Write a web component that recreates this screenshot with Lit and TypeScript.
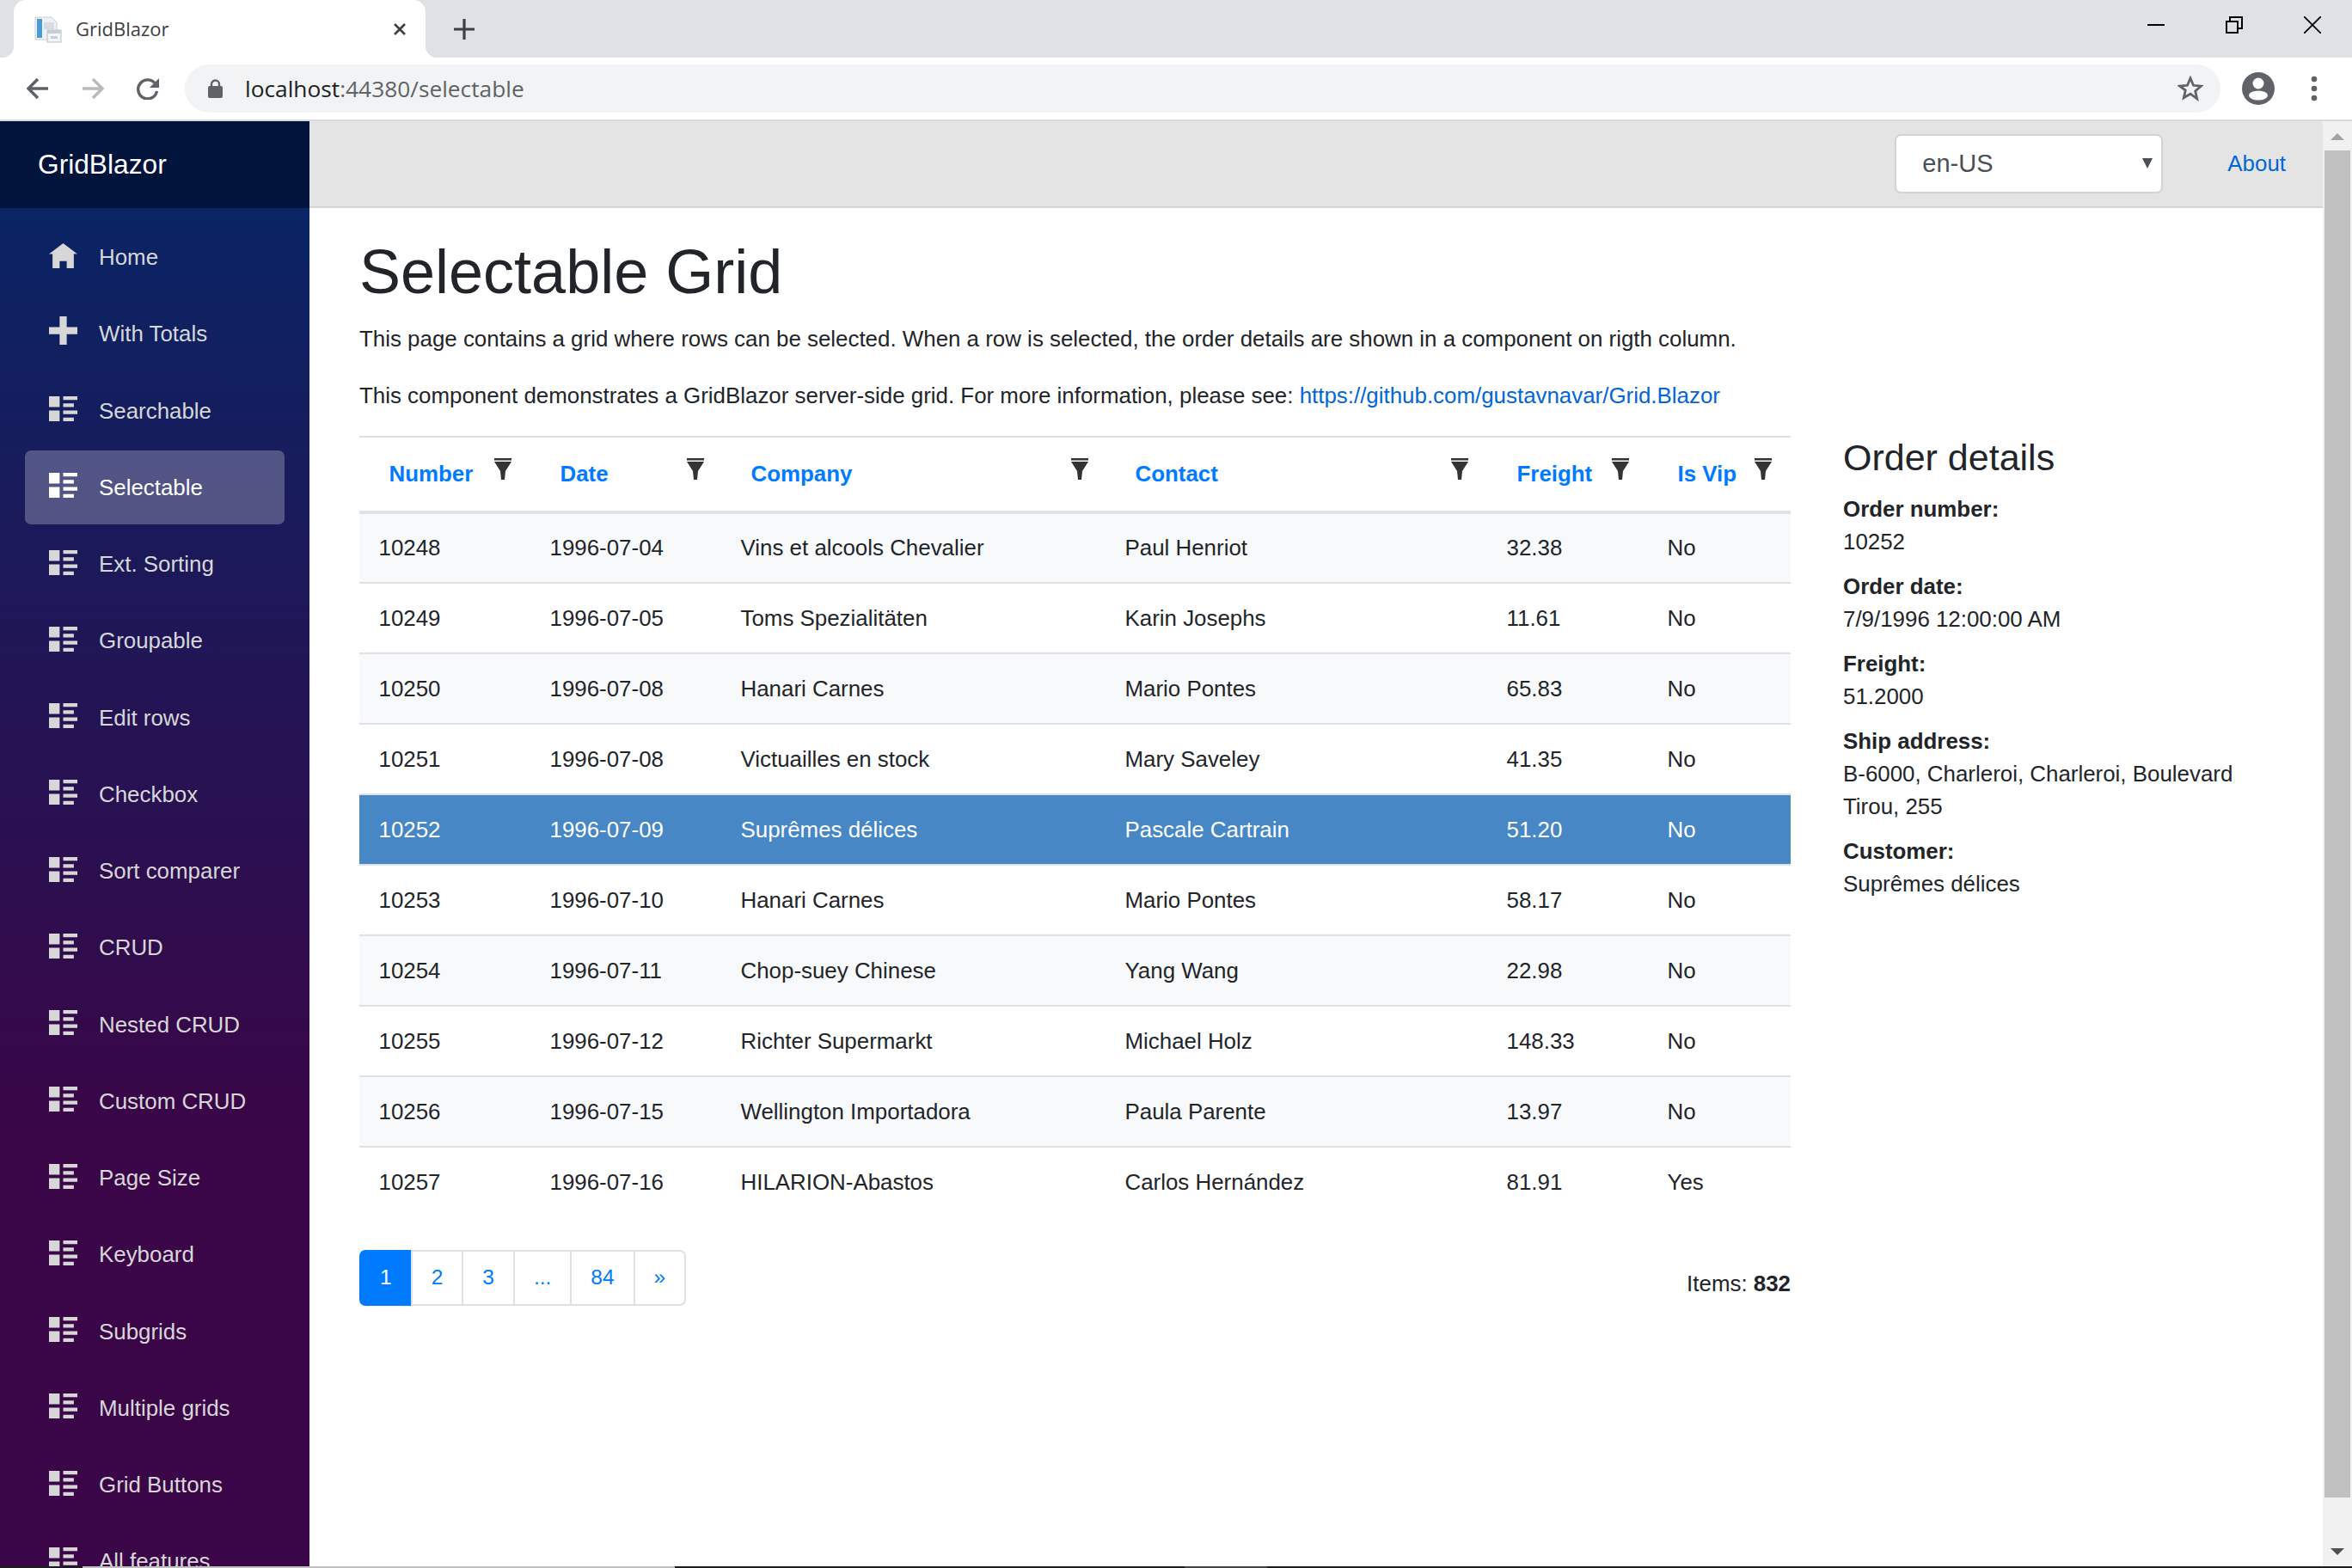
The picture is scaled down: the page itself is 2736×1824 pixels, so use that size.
import { css, html, LitElement, svg } from "lit";
import { customElement } from "lit/decorators.js";

const SANS = css`"Liberation Sans", Arial, sans-serif`;

const LIST_RICH =
  "M0 0v3h3v-3h-3zm4 0v1h4v-1h-4zm0 2v1h3v-1h-3zm-4 2v3h3v-3h-3zm4 0v1h4v-1h-4zm0 2v1h3v-1h-3z";
const HOME = "M4 0l-4 3h1v4h2v-2h2v2h2v-4.03l1 .03-4-3z";
const PLUS = "M3 0v3h-3v2h3v3h2v-3h3v-2h-3v-3h-2z";

@customElement("browser-chrome")
export class BrowserChrome extends LitElement {
  static styles = css`
    :host {
      display: block;
      flex: none;
      font-family: "Open Sans", "Noto Sans", sans-serif;
    }

    .strip {
      display: flex;
      align-items: stretch;
      height: 67px;
      background: #dee1e6;
      padding-left: 16px;
    }

    .tab {
      position: relative;
      flex: none;
      display: flex;
      align-items: center;
      width: 479px;
      background: #fff;
      border-radius: 14px 14px 0 0;
      padding: 0 22px 0 24px;
      box-sizing: border-box;
    }

    .tab::before,
    .tab::after {
      content: "";
      position: absolute;
      bottom: 0;
      width: 14px;
      height: 14px;
      background: #fff;
    }

    .tab::before {
      left: -14px;
      -webkit-mask: radial-gradient(circle at 0 0, transparent 14px, #000 14.5px);
      mask: radial-gradient(circle at 0 0, transparent 14px, #000 14.5px);
    }

    .tab::after {
      right: -14px;
      -webkit-mask: radial-gradient(circle at 100% 0, transparent 14px, #000 14.5px);
      mask: radial-gradient(circle at 100% 0, transparent 14px, #000 14.5px);
    }

    .favicon {
      width: 32px;
      height: 32px;
      flex: none;
    }

    .tab-title {
      flex: 1;
      margin: 0 0 2px 16px;
      font-size: 22px;
      color: #3c4043;
    }

    .new-tab {
      margin-left: 33px;
      align-self: center;
    }

    .spacer {
      flex: 1;
    }

    .window-controls {
      display: flex;
      align-items: center;
      gap: 71px;
      padding-right: 36px;
      margin-top: -10px;
    }

    .toolbar {
      display: flex;
      align-items: center;
      height: 72px;
      background: #fff;
      border-bottom: 2px solid #d9dadd;
      box-sizing: content-box;
      padding-left: 31px;
    }

    .nav-buttons {
      display: flex;
      align-items: center;
      gap: 38px;
    }

    .omnibox {
      flex: none;
      display: flex;
      align-items: center;
      width: 2368px;
      height: 56px;
      margin-left: 30px;
      padding: 0 20px 0 27px;
      box-sizing: border-box;
      background: #f1f3f4;
      border-radius: 28px;
    }

    .url {
      flex: 1;
      margin-left: 26px;
      font-size: 26.3px;
      color: #5f6368;
    }

    .url b {
      font-weight: 400;
      color: #202124;
    }

    .avatar {
      margin-left: 25px;
    }

    .dots {
      margin-left: 42px;
    }

    svg {
      display: block;
      flex: none;
    }
  `;

  render() {
    return html`<div class="strip">
        <div class="tab">
          <svg class="favicon" viewBox="0 0 32 32">
            <path d="M1 2h19l6 6v20H1z" fill="#eef1f5" stroke="#c9ced6" />
            <rect x="3" y="4" width="6" height="22" fill="#4a9bd8" />
            <rect x="11" y="8" width="12" height="8" fill="#d8dde4" />
            <rect x="15" y="17" width="16" height="14" fill="#f4f5f7" stroke="#b9bec6" />
            <rect x="15" y="17" width="16" height="4" fill="#c9ced6" />
            <rect x="19" y="24" width="8" height="3" fill="#c4d0de" />
          </svg>
          <span class="tab-title">GridBlazor</span>
          <svg width="16" height="16" viewBox="0 0 16 16">
            <path d="M2 2l12 12M14 2L2 14" stroke="#3c4043" stroke-width="2.6" />
          </svg>
        </div>
        <svg class="new-tab" width="24" height="24" viewBox="0 0 24 24">
          <path d="M12 0v24M0 12h24" stroke="#3c4043" stroke-width="3.2" />
        </svg>
        <div class="spacer"></div>
        <div class="window-controls">
          <svg width="20" height="20" viewBox="0 0 20 20">
            <path d="M0 10h20" stroke="#000" stroke-width="2" />
          </svg>
          <svg width="20" height="20" viewBox="0 0 20 20">
            <path
              d="M1 6h13v13H1zM5 5V1h14v13h-4"
              fill="none"
              stroke="#000"
              stroke-width="2"
            />
          </svg>
          <svg width="20" height="20" viewBox="0 0 20 20">
            <path d="M0 0l20 20M20 0L0 20" stroke="#000" stroke-width="1.8" />
          </svg>
        </div>
      </div>
      <div class="toolbar">
        <div class="nav-buttons">
          <svg width="26" height="26" viewBox="0 0 26 26">
            <path
              d="M25 13H3M13 2L2 13l11 11"
              fill="none"
              stroke="#5f6368"
              stroke-width="3.4"
            />
          </svg>
          <svg width="26" height="26" viewBox="0 0 26 26">
            <path
              d="M1 13h22M13 2l11 11-11 11"
              fill="none"
              stroke="#bababa"
              stroke-width="3.4"
            />
          </svg>
          <svg width="26" height="26" viewBox="0 0 26 26">
            <path
              d="M22 8a11 11 0 1 0 1.5 8"
              fill="none"
              stroke="#5f6368"
              stroke-width="3.4"
            />
            <path d="M26 1v11H15z" fill="#5f6368" />
          </svg>
        </div>
        <div class="omnibox">
          <svg width="17" height="22" viewBox="0 0 17 22">
            <path
              d="M4 9V6a4.5 4.5 0 0 1 9 0v3"
              fill="none"
              stroke="#5f6368"
              stroke-width="2.4"
            />
            <rect y="8" width="17" height="14" rx="2" fill="#5f6368" />
          </svg>
          <span class="url"><b>localhost</b>:44380/selectable</span>
          <svg width="30" height="30" viewBox="0 0 30 30">
            <path
              d="M15 3l3.5 8.3 9 .8-6.800 5.900 2 8.800L15 21.200 7.300 25.800l2-8.800L2.500 12.100l9-.8z"
              fill="none"
              stroke="#5f6368"
              stroke-width="2.8"
            />
          </svg>
        </div>
        <svg class="avatar" width="38" height="38" viewBox="0 0 38 38">
          <circle cx="19" cy="19" r="19" fill="#5f6368" />
          <circle cx="19" cy="13" r="6.5" fill="#fff" />
          <ellipse cx="19" cy="27" rx="11" ry="5.5" fill="#fff" />
        </svg>
        <svg class="dots" width="8" height="30" viewBox="0 0 8 30">
          <circle cx="4" cy="4" r="3.3" fill="#5f6368" />
          <circle cx="4" cy="15" r="3.3" fill="#5f6368" />
          <circle cx="4" cy="26" r="3.3" fill="#5f6368" />
        </svg>
      </div>`;
  }
}

const NAV_ITEMS: { label: string; icon: string; selected?: boolean }[] = [
  { label: "Home", icon: HOME },
  { label: "With Totals", icon: PLUS },
  { label: "Searchable", icon: LIST_RICH },
  { label: "Selectable", icon: LIST_RICH, selected: true },
  { label: "Ext. Sorting", icon: LIST_RICH },
  { label: "Groupable", icon: LIST_RICH },
  { label: "Edit rows", icon: LIST_RICH },
  { label: "Checkbox", icon: LIST_RICH },
  { label: "Sort comparer", icon: LIST_RICH },
  { label: "CRUD", icon: LIST_RICH },
  { label: "Nested CRUD", icon: LIST_RICH },
  { label: "Custom CRUD", icon: LIST_RICH },
  { label: "Page Size", icon: LIST_RICH },
  { label: "Keyboard", icon: LIST_RICH },
  { label: "Subgrids", icon: LIST_RICH },
  { label: "Multiple grids", icon: LIST_RICH },
  { label: "Grid Buttons", icon: LIST_RICH },
  { label: "All features", icon: LIST_RICH },
];

@customElement("side-nav")
export class SideNav extends LitElement {
  static styles = css`
    :host {
      display: flex;
      flex-direction: column;
      flex: none;
      width: 360px;
      overflow: hidden;
      background: linear-gradient(180deg, rgb(5, 39, 103) 0%, #3a0647 70%);
      font-family: ${SANS};
    }

    .brand {
      flex: none;
      display: flex;
      align-items: center;
      height: 99px;
      padding: 0 0 2px 44px;
      background: #03143c;
      font-size: 31.7px;
      color: #fff;
    }

    nav {
      display: flex;
      flex-direction: column;
      gap: 3.25px;
      padding: 14px 29px 0;
    }

    a {
      flex: none;
      display: flex;
      align-items: center;
      height: 86px;
      padding-left: 28px;
      border-radius: 7px;
      font-size: 25.9px;
      color: #d7d7d7;
    }

    a.selected {
      background: rgba(255, 255, 255, 0.25);
      color: #fff;
    }

    svg {
      flex: none;
      width: 33px;
      height: 33px;
      margin-right: 25px;
      fill: currentColor;
    }

    svg.raised {
      margin-top: -8px;
    }
  `;

  render() {
    return html`<div class="brand">GridBlazor</div>
      <nav>
        ${NAV_ITEMS.map(
          (item) => html`<a class=${item.selected ? "selected" : ""}>
            <svg class=${item.icon === PLUS ? "raised" : ""} viewBox="0 0 8 8">
              ${svg`<path d=${item.icon} />`}
            </svg>
            ${item.label}
          </a>`,
        )}
      </nav>`;
  }
}

const COLUMNS = [
  { title: "Number", width: 199 },
  { title: "Date", width: 222 },
  { title: "Company", width: 447 },
  { title: "Contact", width: 444 },
  { title: "Freight", width: 187 },
  { title: "Is Vip", width: 166 },
];

const ROWS = [
  ["10248", "1996-07-04", "Vins et alcools Chevalier", "Paul Henriot", "32.38", "No"],
  ["10249", "1996-07-05", "Toms Spezialitäten", "Karin Josephs", "11.61", "No"],
  ["10250", "1996-07-08", "Hanari Carnes", "Mario Pontes", "65.83", "No"],
  ["10251", "1996-07-08", "Victuailles en stock", "Mary Saveley", "41.35", "No"],
  ["10252", "1996-07-09", "Suprêmes délices", "Pascale Cartrain", "51.20", "No"],
  ["10253", "1996-07-10", "Hanari Carnes", "Mario Pontes", "58.17", "No"],
  ["10254", "1996-07-11", "Chop-suey Chinese", "Yang Wang", "22.98", "No"],
  ["10255", "1996-07-12", "Richter Supermarkt", "Michael Holz", "148.33", "No"],
  ["10256", "1996-07-15", "Wellington Importadora", "Paula Parente", "13.97", "No"],
  ["10257", "1996-07-16", "HILARION-Abastos", "Carlos Hernández", "81.91", "Yes"],
];

const SELECTED_ROW = "10252";
const PAGES = ["1", "2", "3", "...", "84", "»"];

@customElement("orders-grid")
export class OrdersGrid extends LitElement {
  static styles = css`
    :host {
      display: block;
      width: 1665px;
      flex: none;
    }

    table {
      width: 100%;
      border-collapse: collapse;
      table-layout: fixed;
      border-top: 2px solid #dee2e6;
      font-size: 25.9px;
      color: #212529;
    }

    th {
      position: relative;
      height: 88px;
      padding: 0 0 0 34.5px;
      box-sizing: border-box;
      border-bottom: 4px solid #dee2e6;
      text-align: left;
      font-weight: 700;
      color: #007bff;
    }

    .filter {
      position: absolute;
      top: 24px;
      right: 22px;
      width: 20px;
      height: 25px;
    }

    th:nth-child(2) .filter,
    th:nth-child(3) .filter {
      right: 20.5px;
    }

    td {
      height: 82px;
      padding: 0 0 0 22.5px;
      box-sizing: border-box;
      border-bottom: 2px solid #dee2e6;
    }

    tbody tr:nth-child(odd) td {
      background: #f8f9fa;
    }

    tbody tr:last-child td {
      border-bottom: none;
    }

    tbody tr.selected td {
      background: #4787c5;
      color: #fff;
    }

    .footer {
      display: flex;
      justify-content: space-between;
      align-items: center;
      margin-top: 38px;
      font-size: 25.9px;
      color: #212529;
    }

    .pager {
      display: flex;
      height: 65px;
      font-size: 24.5px;
      color: #007bff;
    }

    .pager span {
      display: flex;
      align-items: center;
      justify-content: center;
      padding: 0 22px;
      margin-left: -2px;
      border: 2px solid #dee2e6;
      background: #fff;
    }

    .pager span:first-child {
      margin-left: 0;
      border-radius: 7px 0 0 7px;
      border-color: #007bff;
      background: #007bff;
      color: #fff;
    }

    .pager span:last-child {
      border-radius: 0 7px 7px 0;
    }

    .count {
      padding-top: 14px;
    }
  `;

  render() {
    return html`<table>
        <colgroup>
          ${COLUMNS.map((c) => html`<col style="width: ${c.width}px" />`)}
        </colgroup>
        <thead>
          <tr>
            ${COLUMNS.map(
              (c) => html`<th>
                ${c.title}
                <svg class="filter" viewBox="0 0 20 25">
                  <rect width="20" height="2.5" fill="#333" />
                  <path d="M0 4h20l-7 11-1 10H8L7 15z" fill="#333" />
                </svg>
              </th>`,
            )}
          </tr>
        </thead>
        <tbody>
          ${ROWS.map(
            (row) => html`<tr class=${row[0] === SELECTED_ROW ? "selected" : ""}>
              ${row.map((cell) => html`<td>${cell}</td>`)}
            </tr>`,
          )}
        </tbody>
      </table>
      <div class="footer">
        <div class="pager">${PAGES.map((p) => html`<span>${p}</span>`)}</div>
        <div class="count">Items: <b>832</b></div>
      </div>`;
  }
}

const DETAILS: [string, string][] = [
  ["Order number:", "10252"],
  ["Order date:", "7/9/1996 12:00:00 AM"],
  ["Freight:", "51.2000"],
  ["Ship address:", "B-6000, Charleroi, Charleroi, Boulevard Tirou, 255"],
  ["Customer:", "Suprêmes délices"],
];

@customElement("app-root")
export class AppRoot extends LitElement {
  static styles = css`
    :host {
      display: flex;
      flex-direction: column;
      width: 2736px;
      height: 1824px;
      overflow: hidden;
      background: #fff;
      font-family: ${SANS};
      font-size: 25.9px;
      line-height: 38px;
      color: #212529;
    }

    .page {
      flex: 1;
      min-height: 0;
      display: flex;
    }

    .main {
      flex: 1;
      min-width: 0;
      display: flex;
      flex-direction: column;
    }

    .top-row {
      flex: none;
      display: flex;
      align-items: center;
      justify-content: flex-end;
      height: 99px;
      padding-right: 43px;
      background: #e4e4e4;
      border-bottom: 2px solid #d6d5d5;
    }

    .culture {
      position: relative;
      display: flex;
      align-items: center;
      width: 312px;
      height: 69px;
      padding: 0 0 2px 30px;
      box-sizing: border-box;
      background: #fff;
      border: 2px solid #ced4da;
      border-radius: 7px;
      font-size: 29px;
      color: #495057;
    }

    .culture svg {
      position: absolute;
      right: 10px;
      top: 26px;
    }

    .about {
      margin: 0 0 2px 75px;
      color: #0366d6;
    }

    .content {
      padding: 31px 0 0 58px;
    }

    h1 {
      margin: 0 0 15.5px;
      font-size: 72px;
      line-height: 86px;
      font-weight: 400;
    }

    p {
      margin: 0 0 28px;
    }

    p a {
      color: #0366d6;
    }

    .columns {
      display: flex;
      gap: 61px;
    }

    .details {
      width: 480px;
    }

    h4 {
      margin: 0 0 15.5px;
      font-size: 43px;
      line-height: 51px;
      font-weight: 400;
    }

    .detail {
      margin-bottom: 14px;
    }

    .detail b {
      display: block;
    }

    .scrollbar {
      flex: none;
      display: flex;
      flex-direction: column;
      align-items: center;
      width: 34px;
      background: #f1f1f1;
    }

    .scroll-up {
      margin-top: 14px;
    }

    .thumb {
      width: 30px;
      height: 1567px;
      margin-top: 12px;
      background: #c0c0c0;
    }

    .scroll-down {
      margin-top: 59px;
    }

    .taskbar {
      flex: none;
      display: flex;
      height: 2px;
      background: #1c1c1c;
    }

    .taskbar i {
      height: 2px;
    }

    .taskbar .a {
      width: 689px;
      margin-left: 96px;
      background: #c0c0c0;
    }

    .taskbar .b {
      width: 96px;
      margin-left: 593px;
      background: #444;
    }
  `;

  render() {
    return html`<browser-chrome></browser-chrome>
      <div class="page">
        <side-nav></side-nav>
        <div class="main">
          <div class="top-row">
            <div class="culture">
              en-US
              <svg width="12" height="12" viewBox="0 0 12 12">
                <path d="M0 0h12l-6 12z" fill="#495057" />
              </svg>
            </div>
            <a class="about">About</a>
          </div>
          <div class="content">
            <h1>Selectable Grid</h1>
            <p>
              This page contains a grid where rows can be selected. When a row
              is selected, the order details are shown in a component on rigth
              column.
            </p>
            <p>
              This component demonstrates a GridBlazor server-side grid. For
              more information, please see:
              <a>https://github.com/gustavnavar/Grid.Blazor</a>
            </p>
            <div class="columns">
              <orders-grid></orders-grid>
              <div class="details">
                <h4>Order details</h4>
                ${DETAILS.map(
                  ([k, v]) => html`<div class="detail"><b>${k}</b>${v}</div>`,
                )}
              </div>
            </div>
          </div>
        </div>
        <div class="scrollbar">
          <svg class="scroll-up" width="16" height="8" viewBox="0 0 16 8">
            <path d="M8 0l8 8H0z" fill="#a3a3a3" />
          </svg>
          <div class="thumb"></div>
          <svg class="scroll-down" width="16" height="8" viewBox="0 0 16 8">
            <path d="M0 0h16l-8 8z" fill="#505050" />
          </svg>
        </div>
      </div>
      <div class="taskbar"><i class="a"></i><i class="b"></i></div>`;
  }
}
